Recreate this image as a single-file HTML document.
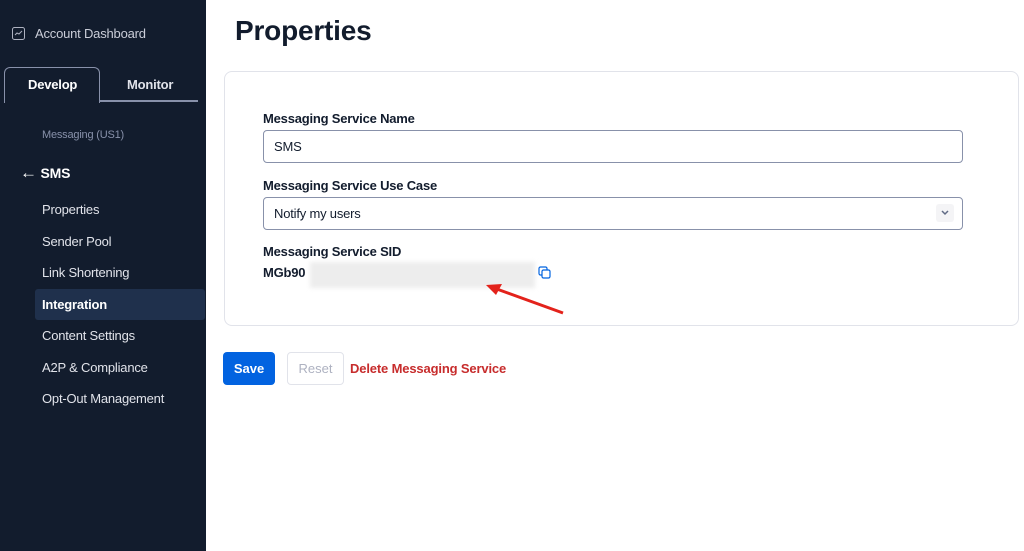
<!DOCTYPE html>
<html><head><style>
*{box-sizing:border-box;margin:0;padding:0}
body{width:1024px;height:551px;background:#fff;font-family:"Liberation Sans",sans-serif;position:relative;overflow:hidden}
.sb{position:absolute;left:0;top:0;width:206px;height:551px;background:#121c2d;color:#e1e3ea}
.a{position:absolute;font-size:13px;letter-spacing:-0.2px}
.t{position:absolute;color:#121c2d;letter-spacing:-0.2px}
</style></head><body>
<div class="sb">
<svg style="position:absolute;left:12px;top:27px" width="13" height="13" viewBox="0 0 13 13"><rect x="0.5" y="0.5" width="12" height="12" rx="2" fill="none" stroke="#aeb2c1"/><path d="M3 8l2-2 2 1 3-3" fill="none" stroke="#aeb2c1"/></svg>
<div class="a" style="left:35px;top:26px;color:#cacdd8">Account Dashboard</div>
<div style="position:absolute;left:4px;top:67px;width:96px;height:36px;border:1px solid #8891aa;border-bottom:none;border-radius:6px 6px 0 0"></div>
<div style="position:absolute;left:100px;top:100px;width:98px;height:2px;background:#8891aa"></div>
<div class="a" style="left:28px;top:77px;font-weight:bold;color:#fff">Develop</div>
<div class="a" style="left:127px;top:77px;font-weight:bold;color:#e1e3ea">Monitor</div>
<div class="a" style="left:42px;top:129px;font-size:11px;color:#8891aa">Messaging (US1)</div>
<div class="a" style="left:20px;top:163px;font-size:14px;font-weight:bold;color:#fff"><span style="font-size:17px;font-weight:normal">&larr;</span> SMS</div>
<div class="a" style="left:42px;top:202px">Properties</div>
<div class="a" style="left:42px;top:234px">Sender Pool</div>
<div class="a" style="left:42px;top:265px">Link Shortening</div>
<div style="position:absolute;left:35px;top:289px;width:170px;height:31px;background:#1f304c;border-radius:3px"></div>
<div class="a" style="left:42px;top:297px;font-weight:bold;color:#fff">Integration</div>
<div class="a" style="left:42px;top:328px">Content Settings</div>
<div class="a" style="left:42px;top:360px">A2P &amp; Compliance</div>
<div class="a" style="left:42px;top:391px">Opt-Out Management</div>
</div>
<div class="t" style="left:235px;top:15px;font-size:28px;font-weight:bold">Properties</div>
<div style="position:absolute;left:224px;top:71px;width:795px;height:255px;border:1px solid #e1e3ea;border-radius:8px"></div>
<div class="t" style="left:263px;top:111px;font-size:13px;font-weight:bold">Messaging Service Name</div>
<div style="position:absolute;left:263px;top:130px;width:700px;height:33px;border:1px solid #8891aa;border-radius:4px"></div>
<div class="t" style="left:274px;top:139px;font-size:13px">SMS</div>
<div class="t" style="left:263px;top:178px;font-size:13px;font-weight:bold">Messaging Service Use Case</div>
<div style="position:absolute;left:263px;top:197px;width:700px;height:33px;border:1px solid #8891aa;border-radius:4px"></div>
<div class="t" style="left:274px;top:206px;font-size:13px">Notify my users</div>
<div style="position:absolute;left:936px;top:204px;width:18px;height:18px;background:#f4f4f6;border-radius:3px"></div>
<svg style="position:absolute;left:941px;top:210px" width="8" height="6"><path d="M1 1l3 3 3-3" fill="none" stroke="#606b85" stroke-width="1.5"/></svg>
<div class="t" style="left:263px;top:244px;font-size:13px;font-weight:bold">Messaging Service SID</div>
<div class="t" style="left:263px;top:265px;font-size:13px;font-weight:bold">MGb90</div>
<div style="position:absolute;left:310px;top:262px;width:225px;height:26px;background:#ededed;filter:blur(2px)"></div>
<svg style="position:absolute;left:538px;top:266px" width="14" height="14" viewBox="0 0 14 14"><rect x="1" y="1" width="8" height="8" rx="1.5" fill="none" stroke="#0263e0" stroke-width="1.2"/><rect x="4" y="4" width="8" height="8" rx="1.5" fill="#fff" stroke="#0263e0" stroke-width="1.2"/></svg>
<svg style="position:absolute;left:480px;top:280px" width="90" height="40"><path d="M83 33L14 8" stroke="#e3221b" stroke-width="3"/><path d="M6 5l16-1-6 11z" fill="#e3221b"/></svg>
<div style="position:absolute;left:223px;top:352px;width:52px;height:33px;background:#0263e0;border-radius:4px;color:#fff;font-size:13px;font-weight:bold;text-align:center;line-height:33px">Save</div>
<div style="position:absolute;left:287px;top:352px;width:57px;height:33px;border:1px solid #e1e3ea;border-radius:4px;color:#aeb2c1;font-size:13px;text-align:center;line-height:31px">Reset</div>
<div class="t" style="left:350px;top:361px;font-size:13px;font-weight:bold;color:#c72c2c;letter-spacing:-0.15px">Delete Messaging Service</div>
</body></html>
